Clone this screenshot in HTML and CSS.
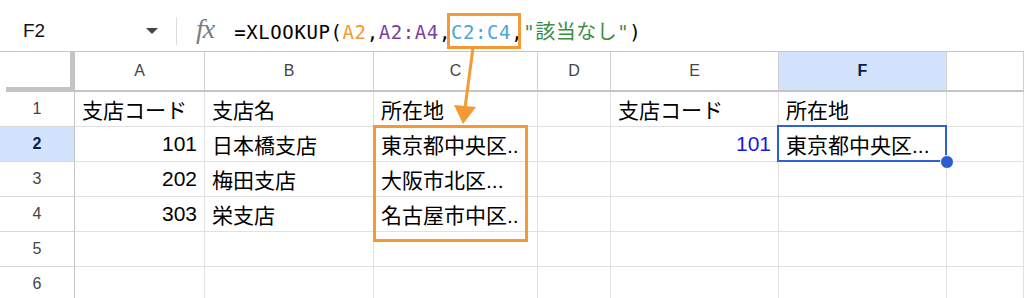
FILE: index.html
```html
<!DOCTYPE html>
<html lang="ja">
<head>
  <meta charset="UTF-8">
  <title>XLOOKUP</title>
  <link rel="stylesheet" href="styles.css">
</head>
<body>
  <div class="toolbar">
    <div class="name-box">
      <span class="name">F2</span>
      <span class="caret"></span>
    </div>
    <div class="sep"></div>
    <div class="fx">fx</div>
    <div class="formula">=XLOOKUP(<span class="ref-a">A2</span>,<span class="ref-b">A2:A4</span>,<span class="ref-c">C2:C4</span>,<span class="str">"<span class="jp">該当なし</span>"</span>)</div>
  </div>

  <div class="sheet">
    <div class="corner"></div>
    <div class="col-head">A</div>
    <div class="col-head">B</div>
    <div class="col-head">C</div>
    <div class="col-head">D</div>
    <div class="col-head">E</div>
    <div class="col-head active">F</div>
    <div class="col-head"></div>

    <div class="row-head">1</div>
    <div class="cell">支店コード</div>
    <div class="cell">支店名</div>
    <div class="cell">所在地</div>
    <div class="cell"></div>
    <div class="cell">支店コード</div>
    <div class="cell">所在地</div>
    <div class="cell"></div>

    <div class="row-head active">2</div>
    <div class="cell num">101</div>
    <div class="cell">日本橋支店</div>
    <div class="cell">東京都中央区..</div>
    <div class="cell"></div>
    <div class="cell num blue">101</div>
    <div class="cell selected">東京都中央区...</div>
    <div class="cell"></div>

    <div class="row-head">3</div>
    <div class="cell num">202</div>
    <div class="cell">梅田支店</div>
    <div class="cell">大阪市北区...</div>
    <div class="cell"></div>
    <div class="cell"></div>
    <div class="cell"></div>
    <div class="cell"></div>

    <div class="row-head">4</div>
    <div class="cell num">303</div>
    <div class="cell">栄支店</div>
    <div class="cell">名古屋市中区..</div>
    <div class="cell"></div>
    <div class="cell"></div>
    <div class="cell"></div>
    <div class="cell"></div>

    <div class="row-head">5</div>
    <div class="cell"></div>
    <div class="cell"></div>
    <div class="cell"></div>
    <div class="cell"></div>
    <div class="cell"></div>
    <div class="cell"></div>
    <div class="cell"></div>

    <div class="row-head">6</div>
    <div class="cell"></div>
    <div class="cell"></div>
    <div class="cell"></div>
    <div class="cell"></div>
    <div class="cell"></div>
    <div class="cell"></div>
    <div class="cell"></div>
  </div>

  <!-- annotation: highlight + arrow -->
  <svg class="marks" width="1024" height="298" viewBox="0 0 1024 298">
    <rect x="448.5" y="14.5" width="71" height="33" fill="none" stroke="#f39a37" stroke-width="3"/>
    <line x1="473" y1="48" x2="465" y2="108" stroke="#f39a37" stroke-width="3"/>
    <polygon points="454,105 476,107 463,124" fill="#f39a37"/>
    <rect x="374.5" y="126.5" width="152" height="114" fill="none" stroke="#f39a37" stroke-width="3"/>
  </svg>
</body>
</html>
```

FILE: styles.css
```css
body {
  margin: 0;
  width: 1024px;
  height: 298px;
  overflow: hidden;
  background: #fff;
  font-family: "Liberation Sans", Arial, "Noto Sans CJK JP", sans-serif;
  color: #000;
  position: relative;
}
.toolbar {
  height: 52px;
  box-sizing: border-box;
  padding-top: 10px;
  border-bottom: 1px solid #c7c7c7;
  display: flex;
  align-items: center;
}
.name-box {
  width: 176px;
  display: flex;
  align-items: center;
  justify-content: space-between;
  padding: 0 18px 0 23px;
  box-sizing: border-box;
}
.name {
  font-size: 19px;
  color: #111;
}
.caret {
  width: 0;
  height: 0;
  border-left: 6px solid transparent;
  border-right: 6px solid transparent;
  border-top: 6px solid #444;
}
.sep {
  width: 1px;
  height: 28px;
  background: #dadce0;
}
.fx {
  font-family: "Liberation Serif", serif;
  font-style: italic;
  font-size: 28px;
  color: #7d7d7d;
  margin: -4px 20px 0 19px;
  letter-spacing: -1px;
}
.formula {
  font-family: "DejaVu Sans Mono", "Noto Sans CJK JP", monospace;
  font-size: 19px;
  letter-spacing: 0.6px;
  white-space: nowrap;
}
.formula .jp {
  font-family: "Noto Sans CJK JP", sans-serif;
  font-size: 20px;
  letter-spacing: 0.5px;
}
.ref-a { color: #f39a37; }
.ref-b { color: #7b3f9e; }
.ref-c { color: #4aa6d8; }
.str { color: #3b8e3e; }

.sheet {
  display: grid;
  grid-template-columns: 75px 130px 169px 164px 73px 168px 168px 1fr;
  grid-template-rows: 40px repeat(6, 35px);
}
.sheet > div {
  box-sizing: border-box;
  display: flex;
  align-items: center;
  white-space: nowrap;
  overflow: hidden;
}
.corner {
  border-right: 5px solid #c4c4c4;
  border-bottom: 5px solid #c4c4c4;
  margin-left: 6px;
}
.col-head {
  justify-content: center;
  font-size: 16px;
  color: #444;
  border-right: 1px solid #d0d0d0;
  border-bottom: 2px solid #c4c4c4;
}
.row-head {
  justify-content: center;
  font-size: 16px;
  color: #444;
  border-right: 1px solid #c4c4c4;
  border-bottom: 1px solid #d6d6d6;
}
.active {
  background: #d3e3fd;
  color: #0b1e4a;
  font-weight: bold;
}
.cell {
  font-size: 21px;
  padding: 0 7px;
  border-right: 1px solid #e1e1e1;
  border-bottom: 1px solid #e1e1e1;
}
.num {
  justify-content: flex-end;
}
.blue {
  color: #1818e8;
}
.sheet > .selected {
  overflow: visible;
  position: relative;
}
.selected::before {
  content: "";
  position: absolute;
  left: -2px;
  top: -2px;
  right: -1px;
  bottom: -1px;
  border: 2px solid #2e62d3;
}
.selected::after {
  content: "";
  position: absolute;
  right: -8px;
  bottom: -8px;
  width: 12px;
  height: 12px;
  border-radius: 50%;
  background: #2a5dcf;
  border: 1px solid #fff;
  z-index: 2;
}
.marks {
  position: absolute;
  left: 0;
  top: 0;
  pointer-events: none;
}
```
